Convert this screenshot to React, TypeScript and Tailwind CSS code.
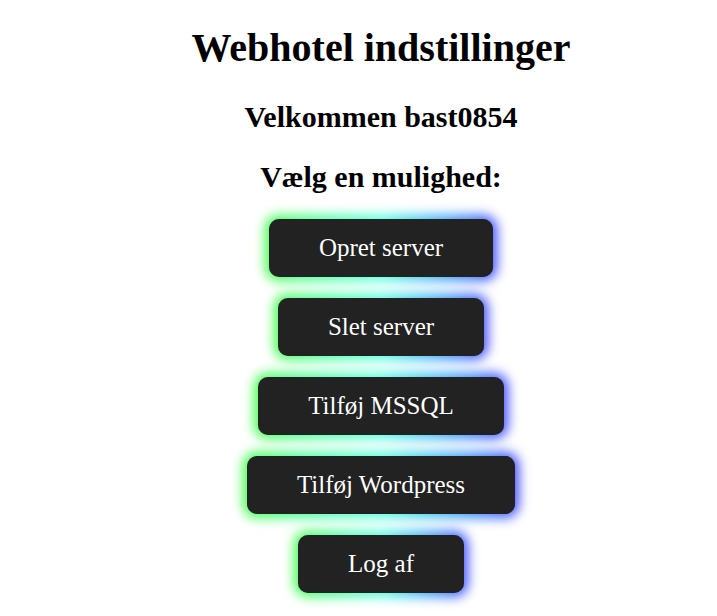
const OPTIONS = ["Opret server", "Slet server", "Tilføj MSSQL", "Tilføj Wordpress", "Log af"];

function GlowButton({ label }: { label: string }) {
  return (
    <button type="button" className="relative isolate h-[58px] rounded-[10px] bg-[#222222] px-[50px] text-[25px] text-white">
      <span className="absolute -inset-[4px] -z-10 rounded-[14px] bg-gradient-to-r from-[#44ff44] via-[#55ffdd] to-[#4444ff] blur-[6px]" />
      <span className="absolute inset-0 -z-10 rounded-[10px] bg-[#222222]" />
      {label}
    </button>
  );
}

export default function App() {
  return (
    <div className="min-h-screen bg-white pl-[45px] text-black" style={{ fontFamily: '"Liberation Serif", "Times New Roman", serif' }}>
      <div className="flex flex-col items-center">
        <h1 className="mt-[24px] text-[40px] font-bold leading-[48px]">Webhotel indstillinger</h1>
        <h2 className="mt-[27px] text-[30px] font-bold leading-[36px]">Velkommen bast0854</h2>
        <h2 className="mt-[24px] text-[30px] font-bold leading-[36px]">Vælg en mulighed:</h2>
        <div className="mt-[24px] flex flex-col items-center gap-[21px]">
          {OPTIONS.map((o) => (
            <GlowButton key={o} label={o} />
          ))}
        </div>
      </div>
    </div>
  );
}
